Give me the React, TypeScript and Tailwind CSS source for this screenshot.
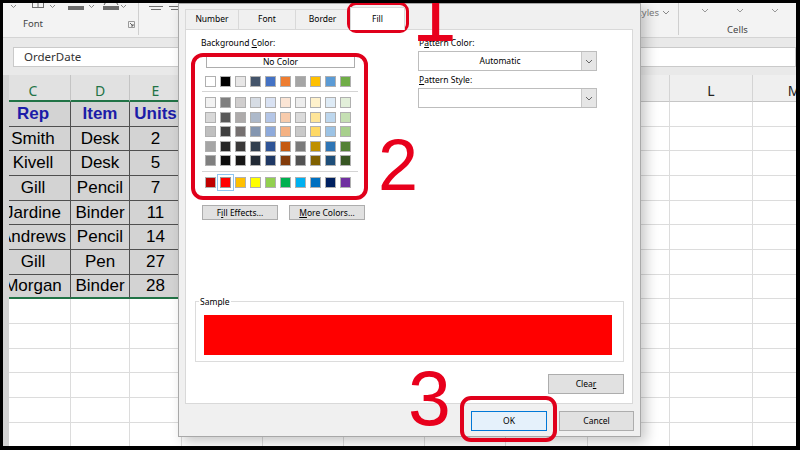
import React from "react";

// Office theme palette used by the Fill tab
const themeRow = ["#ffffff", "#000000", "#e7e6e6", "#44546a", "#4472c4", "#ed7d31", "#a5a5a5", "#ffc000", "#5b9bd5", "#70ad47"];
const tintRows = [
  ["#f2f2f2", "#7f7f7f", "#d0cece", "#d6dce4", "#d9e2f3", "#fbe5d5", "#ededed", "#fff2cc", "#deebf6", "#e2efd9"],
  ["#d8d8d8", "#595959", "#aeabab", "#adb9ca", "#b4c6e7", "#f7cbac", "#dbdbdb", "#fee599", "#bdd7ee", "#c5e0b3"],
  ["#bfbfbf", "#3f3f3f", "#757070", "#8496b0", "#8eaadb", "#f4b183", "#c9c9c9", "#ffd965", "#9cc3e5", "#a8d08d"],
  ["#a5a5a5", "#262626", "#3a3838", "#323f4f", "#2f5496", "#c55a11", "#7b7b7b", "#bf9000", "#2e75b5", "#538135"],
  ["#7f7f7f", "#0c0c0c", "#171616", "#222a35", "#1f3864", "#833c0b", "#525252", "#7f6000", "#1e4e79", "#375623"],
];
const standardRow = ["#c00000", "#ff0000", "#ffc000", "#ffff00", "#92d050", "#00b050", "#00b0f0", "#0070c0", "#002060", "#7030a0"];

const columns = [
  { name: "C", w: "w-[75px]", sel: true },
  { name: "D", w: "w-[59px]", sel: true },
  { name: "E", w: "w-[52px]", sel: true },
  { name: "F", w: "w-[81px]", sel: false },
  { name: "G", w: "w-[81px]", sel: false },
  { name: "H", w: "w-[81px]", sel: false },
  { name: "I", w: "w-[81px]", sel: false },
  { name: "J", w: "w-[82px]", sel: false },
  { name: "K", w: "w-[82px]", sel: false },
  { name: "L", w: "w-[83px]", sel: false },
  { name: "M", w: "w-[83px]", sel: false },
];

const data = [
  ["Rep", "Item", "Units"],
  ["Smith", "Desk", "2"],
  ["Kivell", "Desk", "5"],
  ["Gill", "Pencil", "7"],
  ["Jardine", "Binder", "11"],
  ["Andrews", "Pencil", "14"],
  ["Gill", "Pen", "27"],
  ["Morgan", "Binder", "28"],
];

const Chevron = ({ color = "#666" }: { color?: string }) => (
  <svg width="8" height="5" viewBox="0 0 8 5">
    <path d="M1 1l3 3 3-3" stroke={color} strokeWidth="1" fill="none" />
  </svg>
);

function Ribbon() {
  return (
    <div className="h-[35px] shrink-0 flex bg-[#f3f3f3] border-b border-[#d4d4d4] text-[9.5px] text-[#444]">
      {/* Font group, its buttons cut off by the top edge */}
      <div className="w-[135px] flex flex-col">
        <svg width="135" height="10" viewBox="0 0 135 10" className="shrink-0">
          <path d="M8 2l2.5 2.5L13 2" stroke="#8a8a8a" fill="none" />
          <rect x="29.5" y="-6.5" width="11" height="11" fill="none" stroke="#707070" />
          <path d="M29.5 -1h11M35 -6.5v11" stroke="#707070" />
          <path d="M47 2l2.5 2.5L52 2" stroke="#8a8a8a" fill="none" />
          <path d="M67 -5l5 4.5 5-4.5" stroke="#606060" fill="none" />
          <rect x="65" y="3" width="16" height="4" fill="#6b6b6b" />
          <path d="M86 2l2.5 2.5L91 2" stroke="#8a8a8a" fill="none" />
          <path d="M104 -3l-3 5M112 -3l3 5" stroke="#606060" fill="none" />
          <rect x="100" y="3" width="16" height="4" fill="#6b6b6b" />
          <path d="M118 2l2.5 2.5L123 2" stroke="#8a8a8a" fill="none" />
        </svg>
        <div className="flex-1 flex items-center justify-between pl-[20px] pr-[3px] pb-[2px]">
          <span>Font</span>
          <svg width="7" height="7" viewBox="0 0 7 7">
            <path d="M0.5 0.5h6v6h-6z" fill="none" stroke="#999" />
            <path d="M2 2l3 3M5 3v2H3" stroke="#666" fill="none" />
          </svg>
        </div>
      </div>
      <div className="w-px h-[32px] bg-[#cfcfcf]" />
      {/* Alignment group */}
      <div className="flex-1 pl-[10px] pt-[2px]">
        <svg width="40" height="8" viewBox="0 0 40 8">
          <path d="M0 1.5h14M2 4.5h10" stroke="#707070" />
          <path d="M20 1.5h14M22 4.5h10" stroke="#707070" />
        </svg>
      </div>
      {/* Styles group */}
      <div className="flex items-start pt-[3px] pr-[8px] gap-[3px] text-[#7a7a7a]">
        <span>Cell Styles</span>
        <span className="pt-[4px]">
          <Chevron color="#888" />
        </span>
      </div>
      <div className="w-px h-[32px] bg-[#cfcfcf]" />
      {/* Cells group */}
      <div className="w-[117px] flex flex-col items-center">
        <div className="flex gap-[27px] pt-[5px] pl-[4px]">
          <Chevron color="#999" />
          <Chevron color="#999" />
          <Chevron color="#999" />
        </div>
        <span className="mt-[10px]">Cells</span>
      </div>
    </div>
  );
}

function FormulaBar() {
  return (
    <div className="h-[37px] shrink-0 bg-[#e9e9e9] pt-[9px] pl-[10px]">
      <div className="h-[20px] bg-white border border-[#cacaca] flex items-center pl-[10px] text-[11.5px] text-[#333]">
        OrderDate
      </div>
    </div>
  );
}

function Sheet() {
  return (
    <div className="flex-1 flex min-h-0">
      <div className="w-[6px] shrink-0 bg-[#d3d3d3]" />
      <div className="flex-1 overflow-hidden">
        <div className="ml-[-13px] flex flex-col">
          <div className="flex h-[27px]">
            {columns.map((c) => (
              <div
                key={c.name}
                className={
                  c.sel
                    ? `${c.w} shrink-0 flex items-center justify-center pt-[5px] bg-[#e1e1e1] text-[#217346] text-[14px] border-r border-[#c4c4c4] border-b-2 border-b-[#217346]`
                    : `${c.w} shrink-0 flex items-center justify-center pt-[5px] bg-[#efefef] text-[#222] text-[14px] border-r border-[#d4d4d4] border-b border-b-[#c6c6c6]`
                }
              >
                {c.name}
              </div>
            ))}
          </div>
          {Array.from({ length: 15 }).map((_, r) => (
            <div key={r} className="flex h-[24.67px] font-['Liberation_Sans',Arial,sans-serif] text-[17px]">
              {columns.map((c, ci) => {
                const inRange = c.sel && r < data.length;
                const text = inRange ? data[r][ci] : "";
                let cls = `${c.w} shrink-0 flex items-center justify-center whitespace-nowrap overflow-visible`;
                if (inRange) {
                  cls += " bg-[#d3d3d3] border-r border-b border-[#4f4f4f]";
                  cls += r === 0 ? " font-bold text-[#1c1ca8]" : " text-black";
                  if (r === data.length - 1) cls += " border-b-2 border-b-[#217346]";
                } else {
                  cls += " bg-white border-r border-b border-[#dcdcdc]";
                }
                return (
                  <div key={c.name} className={cls}>
                    {text}
                  </div>
                );
              })}
            </div>
          ))}
        </div>
      </div>
    </div>
  );
}

const Swatch = ({ color, picked = false }: { color: string; picked?: boolean }) => (
  <div
    className={
      picked
        ? "w-[11px] h-[11px] border border-[#9a9a9a] outline outline-1 outline-[#8ec5f2] outline-offset-[2px]"
        : "w-[11px] h-[11px] border border-[#b0b0b0]"
    }
    style={{ backgroundColor: color }}
  />
);

const SmallButton = ({ children, className = "" }: { children: React.ReactNode; className?: string }) => (
  <div className={`flex items-center justify-center bg-[#e1e1e1] border border-[#adadad] leading-[10px] ${className}`}>
    {children}
  </div>
);

const Select = ({ value }: { value: string }) => (
  <div className="w-[179px] h-[20px] flex bg-white border border-[#bdbdbd]">
    <div className="flex-1 flex items-center justify-center">{value}</div>
    <div className="w-[15px] flex items-center justify-center bg-[#e6e6e6] border-l border-[#c8c8c8]">
      <Chevron />
    </div>
  </div>
);

function FormatDialog() {
  const tabs = ["Number", "Font", "Border", "Fill"];
  const tabWidths = ["w-[53px]", "w-[57px]", "w-[55px]", "w-[55px]"];
  return (
    <div className="absolute left-[175px] top-0 w-[463px] h-[434px] bg-[#f0f0f0] border border-[#a8a8a8] shadow-[5px_5px_12px_rgba(0,0,0,0.22)] text-[8.5px] text-black">
      <div className="ml-[6px] mt-[4px] flex items-end h-[21px]">
        {tabs.map((t, i) =>
          t === "Fill" ? (
            <div
              key={t}
              className={`${tabWidths[i]} h-[23px] mb-[-1px] relative z-10 flex items-center justify-center bg-white border border-b-0 border-[#d9d9d9]`}
            >
              {t}
            </div>
          ) : (
            <div
              key={t}
              className={`${tabWidths[i]} h-[20px] flex items-center justify-center border-t border-l border-[#d9d9d9] ${i === 2 ? "border-r" : ""}`}
            >
              {t}
            </div>
          )
        )}
      </div>
      <div className="ml-[6px] w-[448px] h-[375px] bg-white border border-[#d9d9d9]">
        <div className="flex pt-[7px]">
          {/* background colour picker */}
          <div className="w-[232px] pl-[15px] flex flex-col">
            <div className="leading-[12px]">
              Background <span className="underline">C</span>olor:
            </div>
            <div className="ml-[5px] mt-[7px] w-[149px] h-[12px] flex items-center justify-center bg-white border border-[#adadad] leading-[10px]">
              No Color
            </div>
            <div className="ml-[4px] mt-[8px] flex gap-[4px]">
              {themeRow.map((c) => (
                <Swatch key={c} color={c} />
              ))}
            </div>
            <div className="ml-[1px] mt-[4px] w-[156px] h-px bg-[#d4d4d4]" />
            <div className="ml-[4px] mt-[5px] flex flex-col gap-[3.5px]">
              {tintRows.map((row, ri) => (
                <div key={ri} className="flex gap-[4px]">
                  {row.map((c) => (
                    <Swatch key={c} color={c} />
                  ))}
                </div>
              ))}
            </div>
            <div className="ml-[1px] mt-[5px] w-[156px] h-px bg-[#d4d4d4]" />
            <div className="ml-[4px] mt-[5px] flex gap-[4px]">
              {standardRow.map((c, i) => (
                <Swatch key={c + i} color={c} picked={i === 1} />
              ))}
            </div>
            <div className="ml-[1px] mt-[17px] flex gap-[11px]">
              <SmallButton className="w-[76px] h-[15px]">
                F<span className="underline">i</span>ll Effects...
              </SmallButton>
              <SmallButton className="w-[76px] h-[15px]">
                <span className="underline">M</span>ore Colors...
              </SmallButton>
            </div>
          </div>
          {/* pattern settings */}
          <div className="flex flex-col">
            <div className="leading-[12px] pl-[1px]">
              P<span className="underline">a</span>ttern Color:
            </div>
            <div className="mt-[2px]">
              <Select value="Automatic" />
            </div>
            <div className="leading-[12px] pl-[1px] mt-[3px]">
              <span className="underline">P</span>attern Style:
            </div>
            <div className="mt-[2px]">
              <Select value="" />
            </div>
          </div>
        </div>
        {/* sample preview */}
        <div className="ml-[9px] mt-[81px] w-[429px] h-[61px] border border-[#dcdcdc]">
          <div className="mt-[-6px] ml-[3px] w-fit px-[1px] bg-white leading-[12px]">Sample</div>
          <div className="ml-[8px] mt-[7px] w-[408px] h-[40px] bg-[#ff0000]" />
        </div>
        <SmallButton className="ml-[362px] mt-[12px] w-[76px] h-[20px]">
          Clea<span className="underline">r</span>
        </SmallButton>
      </div>
      <div className="ml-[292px] mt-[7px] flex gap-[12px]">
        <div className="w-[76px] h-[20px] flex items-center justify-center bg-[#e5f1fb] border border-[#0078d7]">OK</div>
        <div className="w-[75px] h-[20px] flex items-center justify-center bg-[#e1e1e1] border border-[#adadad]">Cancel</div>
      </div>
    </div>
  );
}

// red step callouts drawn on top of the window
function Marks() {
  return (
    <>
      <div className="absolute left-[344px] top-[-1px] w-[62px] h-[31px] border-[3px] border-[#e0001b] rounded-[9px]" />
      <div className="absolute left-[188px] top-[50px] w-[177px] h-[147px] border-[4px] border-[#e0001b] rounded-[12px]" />
      <div className="absolute left-[457px] top-[393px] w-[97px] h-[46px] border-[4px] border-[#e0001b] rounded-[11px]" />
      <span className="absolute left-[409px] top-[-29px] text-[80px] leading-none text-[#e8001c] font-['Liberation_Sans',Arial,sans-serif]">
        1
      </span>
      <span className="absolute left-[375px] top-[126px] text-[72px] leading-none text-[#e8001c] font-['Liberation_Sans',Arial,sans-serif]">
        2
      </span>
      <span className="absolute left-[405px] top-[357px] text-[77px] leading-none text-[#e8001c] font-['Liberation_Sans',Arial,sans-serif]">
        3
      </span>
    </>
  );
}

export default function App() {
  return (
    <div className="w-[800px] h-[450px] bg-black pt-[3px] pl-[3px]">
      <div className="relative w-[793px] h-[443px] overflow-hidden bg-white flex flex-col font-['Noto_Sans',sans-serif]">
        <Ribbon />
        <FormulaBar />
        <Sheet />
        <FormatDialog />
        <Marks />
      </div>
    </div>
  );
}
